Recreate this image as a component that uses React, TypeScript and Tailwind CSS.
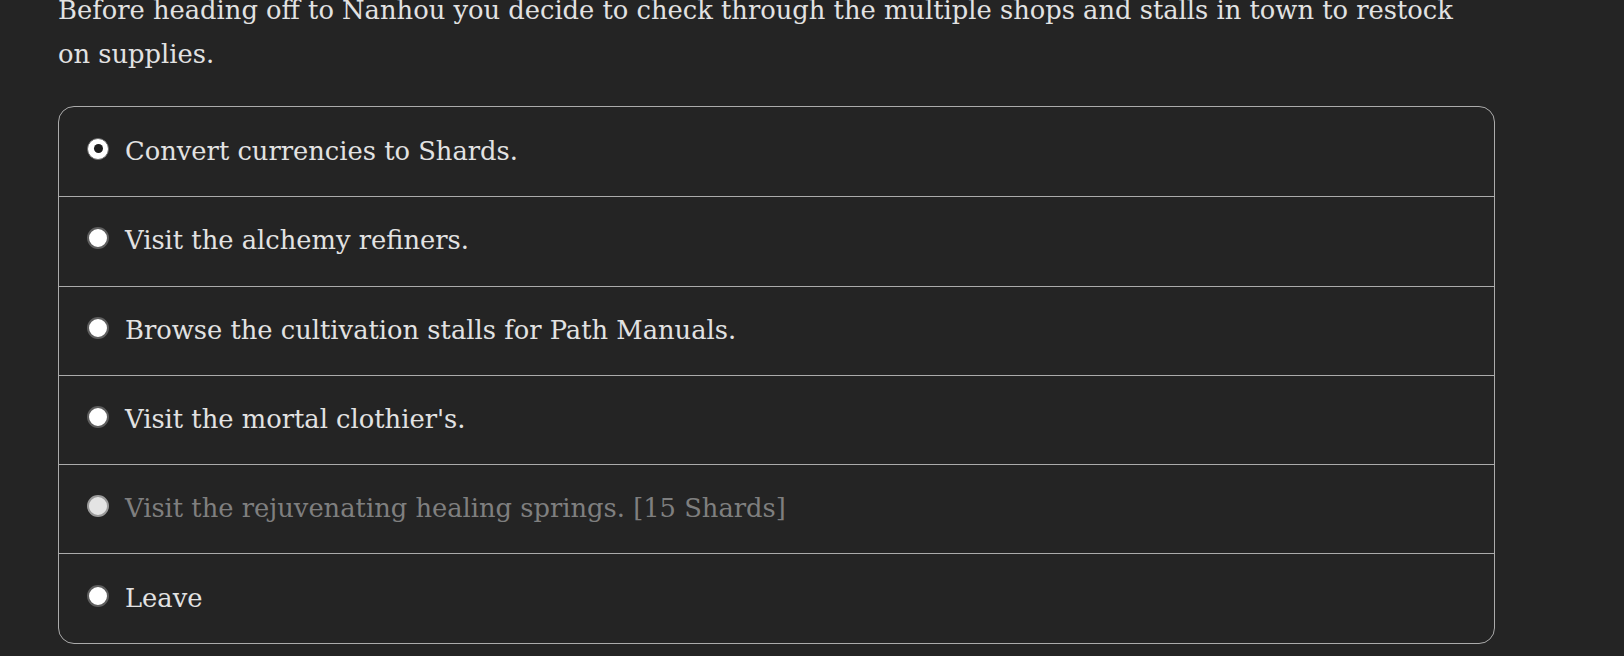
import React from "react";

type Opt = { label: string; selected?: boolean; disabled?: boolean };

const options: Opt[] = [
  { label: "Convert currencies to Shards.", selected: true },
  { label: "Visit the alchemy refiners." },
  { label: "Browse the cultivation stalls for Path Manuals." },
  { label: "Visit the mortal clothier's." },
  { label: "Visit the rejuvenating healing springs. [15 Shards]", disabled: true },
  { label: "Leave" },
];

function Radio({ selected, disabled }: { selected?: boolean; disabled?: boolean }) {
  if (selected) {
    return (
      <span className="flex h-[22px] w-[22px] shrink-0 items-center justify-center rounded-full border-[1.5px] border-[#6b6b6b] bg-white">
        <span className="h-[9px] w-[9px] rounded-full bg-[#1e1e1e]" />
      </span>
    );
  }
  return (
    <span
      className={
        disabled
          ? "h-[22px] w-[22px] shrink-0 rounded-full border-2 border-[#9a9a9a] bg-[#e4e4e4]"
          : "h-[22px] w-[22px] shrink-0 rounded-full border-2 border-[#5e5e5e] bg-white"
      }
    />
  );
}

export default function App() {
  return (
    <div
      className="min-h-[656px] w-full overflow-hidden bg-[#242424] px-[58px]"
      style={{ fontFamily: '"DejaVu Serif", Georgia, serif' }}
    >
      <p className="-mt-[11px] w-[1437px] text-[25.75px] leading-[43.5px] text-[#e2e2e2]">
        Before heading off to Nanhou you decide to check through the multiple shops and stalls in town to restock
        <br />
        on supplies.
      </p>
      <div className="mt-[30px] w-[1437px] overflow-hidden rounded-[16px] border border-[#ababab]">
        {options.map((o, i) => (
          <div
            key={i}
            className={
              "flex h-[89.3px] items-center gap-[16px] pl-[28px] " +
              (i > 0 ? "border-t border-[#ababab]" : "")
            }
          >
            <span className="-mt-[6px] flex">
              <Radio selected={o.selected} disabled={o.disabled} />
            </span>
            <span
              className={
                "-mt-[2px] text-[25.75px] leading-[44px] " +
                (o.disabled ? "text-[#7f7f7f]" : "text-[#e2e2e2]")
              }
            >
              {o.label}
            </span>
          </div>
        ))}
      </div>
    </div>
  );
}
